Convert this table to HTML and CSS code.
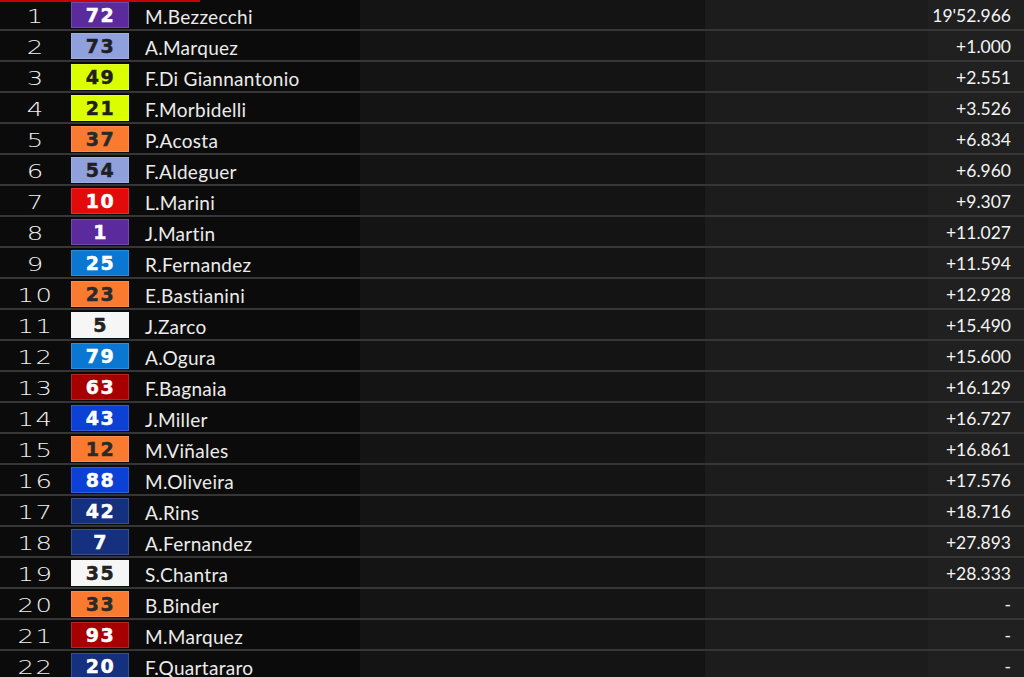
FILE: index.html
```html
<!DOCTYPE html>
<html>
<head>
<meta charset="utf-8">
<link rel="stylesheet" href="styles.css">
</head>
<body>
<div class="results">
  <div class="row"><span class="pos"><b>1</b></span><span class="num purple">72</span><span class="name">M.Bezzecchi</span><span class="time">19'52.966</span></div>
  <div class="row"><span class="pos"><b>2</b></span><span class="num lilac">73</span><span class="name">A.Marquez</span><span class="time">+1.000</span></div>
  <div class="row"><span class="pos"><b>3</b></span><span class="num lime">49</span><span class="name">F.Di Giannantonio</span><span class="time">+2.551</span></div>
  <div class="row"><span class="pos"><b>4</b></span><span class="num lime">21</span><span class="name">F.Morbidelli</span><span class="time">+3.526</span></div>
  <div class="row"><span class="pos"><b>5</b></span><span class="num orange">37</span><span class="name">P.Acosta</span><span class="time">+6.834</span></div>
  <div class="row"><span class="pos"><b>6</b></span><span class="num lilac">54</span><span class="name">F.Aldeguer</span><span class="time">+6.960</span></div>
  <div class="row"><span class="pos"><b>7</b></span><span class="num red">10</span><span class="name">L.Marini</span><span class="time">+9.307</span></div>
  <div class="row"><span class="pos"><b>8</b></span><span class="num purple">1</span><span class="name">J.Martin</span><span class="time">+11.027</span></div>
  <div class="row"><span class="pos"><b>9</b></span><span class="num sky">25</span><span class="name">R.Fernandez</span><span class="time">+11.594</span></div>
  <div class="row"><span class="pos"><b>10</b></span><span class="num orange">23</span><span class="name">E.Bastianini</span><span class="time">+12.928</span></div>
  <div class="row"><span class="pos"><b>11</b></span><span class="num white">5</span><span class="name">J.Zarco</span><span class="time">+15.490</span></div>
  <div class="row"><span class="pos"><b>12</b></span><span class="num sky">79</span><span class="name">A.Ogura</span><span class="time">+15.600</span></div>
  <div class="row"><span class="pos"><b>13</b></span><span class="num crimson">63</span><span class="name">F.Bagnaia</span><span class="time">+16.129</span></div>
  <div class="row"><span class="pos"><b>14</b></span><span class="num blue">43</span><span class="name">J.Miller</span><span class="time">+16.727</span></div>
  <div class="row"><span class="pos"><b>15</b></span><span class="num orange">12</span><span class="name">M.Viñales</span><span class="time">+16.861</span></div>
  <div class="row"><span class="pos"><b>16</b></span><span class="num blue">88</span><span class="name">M.Oliveira</span><span class="time">+17.576</span></div>
  <div class="row"><span class="pos"><b>17</b></span><span class="num navy">42</span><span class="name">A.Rins</span><span class="time">+18.716</span></div>
  <div class="row"><span class="pos"><b>18</b></span><span class="num navy">7</span><span class="name">A.Fernandez</span><span class="time">+27.893</span></div>
  <div class="row"><span class="pos"><b>19</b></span><span class="num white">35</span><span class="name">S.Chantra</span><span class="time">+28.333</span></div>
  <div class="row"><span class="pos"><b>20</b></span><span class="num orange">33</span><span class="name">B.Binder</span><span class="time">-</span></div>
  <div class="row"><span class="pos"><b>21</b></span><span class="num crimson">93</span><span class="name">M.Marquez</span><span class="time">-</span></div>
  <div class="row"><span class="pos"><b>22</b></span><span class="num navy">20</span><span class="name">F.Quartararo</span><span class="time">-</span></div>
</div>
</body>
</html>
```

FILE: styles.css
```css
html, body {
  margin: 0;
  padding: 0;
  background: #0b0b0b;
  overflow: hidden;
}

.results {
  position: relative;
  width: 1024px;
  background: linear-gradient(to right,
    #0b0b0b 0, #0b0b0b 360px,
    #141415 360px, #141415 705px,
    #1c1c1c 705px, #1c1c1c 928px,
    #202020 928px, #202020 100%);
}

.results::before {
  content: "";
  position: absolute;
  top: 0;
  left: 0;
  width: 200px;
  height: 2px;
  background: #c8000a;
}

.row {
  display: grid;
  grid-template-columns: 71px 58px 1fr auto;
  align-items: center;
  height: 29px;
  border-bottom: 2px solid #363636;
  color: #f2f2f2;
}

.pos {
  display: flex;
  justify-content: center;
  font-family: "DejaVu Sans", sans-serif;
  font-weight: 200;
  font-size: 19.5px;
  margin-top: 3px;
}

.pos b {
  font-weight: 200;
  display: inline-block;
  transform: scaleX(1.33);
  letter-spacing: 1px;
}

.num {
  box-sizing: border-box;
  height: 26px;
  margin-top: 1px;
  display: flex;
  align-items: center;
  justify-content: center;
  font-family: "DejaVu Sans", sans-serif;
  font-weight: 700;
  font-size: 19px;
  letter-spacing: 1.5px;
  padding-left: 1px;
  -webkit-text-stroke: 0.5px currentColor;
  border: 1px solid rgba(255,255,255,0.15);
  color: #fff;
}

.num.purple { background: #5b2a9c; }
.num.lilac { background: #8fa0dc; color: #1f1f23; }
.num.lime { background: #dcff00; color: #1f1f1f; }
.num.orange { background: #fa7a30; color: #2a2a2a; }
.num.red { background: #e20a0a; }
.num.sky { background: #0a78d2; }
.num.white { background: #f6f6f6; color: #222; }
.num.crimson { background: #a60000; }
.num.blue { background: #0b41d5; }
.num.navy { background: #15307e; }

.name {
  font-family: "Lato", sans-serif;
  font-size: 19px;
  letter-spacing: 0.3px;
  padding-left: 16px;
  margin-top: 3px;
  color: #ececec;
}

.time {
  font-family: "Lato", sans-serif;
  font-size: 17.5px;
  text-align: right;
  padding-right: 13px;
  margin-top: 2px;
  color: #f4f4f4;
}
```
